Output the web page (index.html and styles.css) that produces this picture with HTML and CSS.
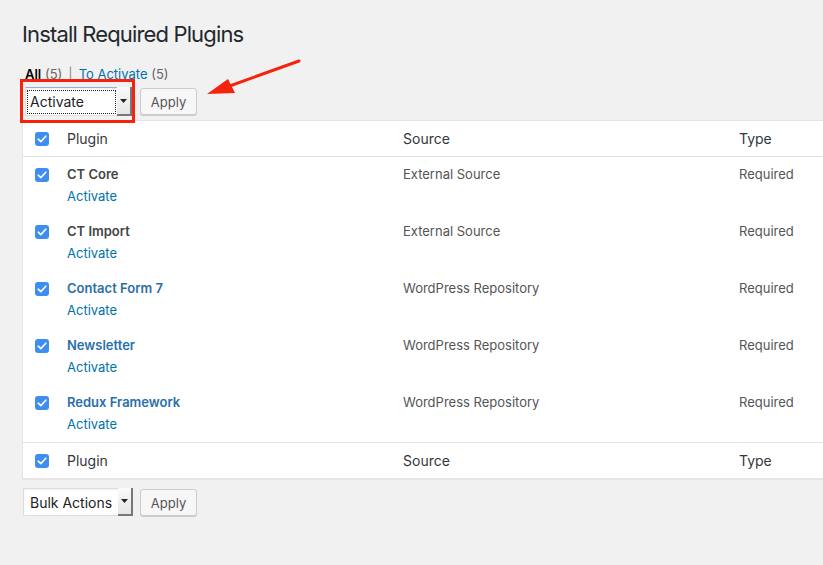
FILE: index.html
```html
<!DOCTYPE html>
<html>
<head>
<meta charset="utf-8">
<link rel="stylesheet" href="styles.css">
</head>
<body>
<div class="wrap">
  <h1 class="title">Install Required Plugins</h1>
  <ul class="subsub">
    <li><span class="current">All</span> <span class="count">(5)</span></li>
    <li class="sep">|</li>
    <li><a class="link">To Activate</a> <span class="count">(5)</span></li>
  </ul>
  <div class="actions top">
    <div class="select focused">
      <span class="sel-text"><span class="dotted">Activate</span></span>
      <span class="sel-arrow"><svg width="7" height="4" viewBox="0 0 7 4"><path d="M0 0h7L3.5 4z" fill="#222"/></svg></span>
    </div>
    <button class="btn">Apply</button>
  </div>
  <div class="table">
    <div class="row head">
      <div class="cell cb"><span class="check"><svg width="10" height="8" viewBox="0 0 10 8"><path d="M1.2 4.2L3.8 6.6 8.8 1.2" fill="none" stroke="#fff" stroke-width="1.6" stroke-linecap="round" stroke-linejoin="round"/></svg></span></div>
      <div class="cell">Plugin</div>
      <div class="cell">Source</div>
      <div class="cell">Type</div>
    </div>
    <div class="row item">
      <div class="cell cb"><span class="check"><svg width="10" height="8" viewBox="0 0 10 8"><path d="M1.2 4.2L3.8 6.6 8.8 1.2" fill="none" stroke="#fff" stroke-width="1.6" stroke-linecap="round" stroke-linejoin="round"/></svg></span></div>
      <div class="cell"><div class="name">CT Core</div><div class="act"><a class="link">Activate</a></div></div>
      <div class="cell muted">External Source</div>
      <div class="cell muted">Required</div>
    </div>
    <div class="row item">
      <div class="cell cb"><span class="check"><svg width="10" height="8" viewBox="0 0 10 8"><path d="M1.2 4.2L3.8 6.6 8.8 1.2" fill="none" stroke="#fff" stroke-width="1.6" stroke-linecap="round" stroke-linejoin="round"/></svg></span></div>
      <div class="cell"><div class="name">CT Import</div><div class="act"><a class="link">Activate</a></div></div>
      <div class="cell muted">External Source</div>
      <div class="cell muted">Required</div>
    </div>
    <div class="row item">
      <div class="cell cb"><span class="check"><svg width="10" height="8" viewBox="0 0 10 8"><path d="M1.2 4.2L3.8 6.6 8.8 1.2" fill="none" stroke="#fff" stroke-width="1.6" stroke-linecap="round" stroke-linejoin="round"/></svg></span></div>
      <div class="cell"><div class="name linked">Contact Form 7</div><div class="act"><a class="link">Activate</a></div></div>
      <div class="cell muted">WordPress Repository</div>
      <div class="cell muted">Required</div>
    </div>
    <div class="row item">
      <div class="cell cb"><span class="check"><svg width="10" height="8" viewBox="0 0 10 8"><path d="M1.2 4.2L3.8 6.6 8.8 1.2" fill="none" stroke="#fff" stroke-width="1.6" stroke-linecap="round" stroke-linejoin="round"/></svg></span></div>
      <div class="cell"><div class="name linked">Newsletter</div><div class="act"><a class="link">Activate</a></div></div>
      <div class="cell muted">WordPress Repository</div>
      <div class="cell muted">Required</div>
    </div>
    <div class="row item">
      <div class="cell cb"><span class="check"><svg width="10" height="8" viewBox="0 0 10 8"><path d="M1.2 4.2L3.8 6.6 8.8 1.2" fill="none" stroke="#fff" stroke-width="1.6" stroke-linecap="round" stroke-linejoin="round"/></svg></span></div>
      <div class="cell"><div class="name linked">Redux Framework</div><div class="act"><a class="link">Activate</a></div></div>
      <div class="cell muted">WordPress Repository</div>
      <div class="cell muted">Required</div>
    </div>
    <div class="row foot">
      <div class="cell cb"><span class="check"><svg width="10" height="8" viewBox="0 0 10 8"><path d="M1.2 4.2L3.8 6.6 8.8 1.2" fill="none" stroke="#fff" stroke-width="1.6" stroke-linecap="round" stroke-linejoin="round"/></svg></span></div>
      <div class="cell">Plugin</div>
      <div class="cell">Source</div>
      <div class="cell">Type</div>
    </div>
  </div>
  <div class="actions bottom">
    <div class="select">
      <span class="sel-text">Bulk Actions</span>
      <span class="sel-arrow"><svg width="7" height="4" viewBox="0 0 7 4"><path d="M0 0h7L3.5 4z" fill="#222"/></svg></span>
    </div>
    <button class="btn">Apply</button>
  </div>
</div>
<div class="redbox"></div>
<svg class="arrow" width="823" height="565" viewBox="0 0 823 565">
  <path d="M299 61L224 88" stroke="#f5230e" stroke-width="3" stroke-linecap="round"/>
  <path d="M207 94L228 79L235 93Z" fill="#f5230e"/>
</svg>
</body>
</html>
```
FILE: styles.css
```css
* { box-sizing: border-box; }
html, body { margin: 0; padding: 0; }
body {
  background: #f1f1f1;
  font-family: Inter, "Noto Sans", sans-serif;
  color: #32373c;
  font-size: 13px;
  width: 823px;
  height: 565px;
  overflow: hidden;
  position: relative;
}
.wrap { padding: 20px 0 0 22px; }
.title {
  margin: 0;
  font-size: 22px;
  font-weight: 400;
  line-height: 29px;
  letter-spacing: -0.85px;
  color: #23282d;
}
.subsub {
  list-style: none;
  margin: 16px 0 0 3px;
  padding: 0;
  display: flex;
  gap: 6px;
  line-height: 18px;
  color: #666;
}
.subsub .current { color: #000; font-weight: 600; }
.subsub .sep { color: #888; }
.link { color: #0073aa; text-decoration: none; }
.actions { display: flex; gap: 8px; align-items: flex-start; }
.actions.top { margin: 4px 0 0 3px; }
.select {
  display: flex;
  height: 29px;
  background: #fff;
  border: 1px solid #ddd;
  box-shadow: inset 0 1px 2px rgba(0,0,0,.07);
}
.actions.top .select { width: 107px; border-top-color: #8fb2d6; }
.actions.bottom .select { width: 110px; height: 28px; }
.sel-text {
  flex: 1;
  display: flex;
  align-items: center;
  padding: 0 1px;
  font-size: 14px;
  color: #222;
}
.actions.bottom .sel-text { padding-left: 6px; }
.dotted {
  flex: 1;
  border: 1px dotted #222;
  height: 24px;
  line-height: 22px;
  padding-left: 2px;
}
.sel-arrow {
  width: 15px;
  display: flex;
  align-items: center;
  justify-content: center;
  background: linear-gradient(#fafafa, #e6e6e6);
  border-right: 2px solid #777;
  border-bottom: 2px solid #777;
  margin: -1px -1px -1px 0;
}
.btn {
  font: inherit;
  font-size: 13px;
  height: 27px;
  width: 57px;
  background: #f7f7f7;
  border: 1px solid #ccc;
  border-radius: 3px;
  box-shadow: 0 1px 0 #ccc;
  color: #555;
  padding: 0;
  margin-top: 1px;
}
.table {
  margin-top: 4px;
  width: 1010px;
  background: #fff;
  border: 1px solid #e5e5e5;
  box-shadow: 0 1px 1px rgba(0,0,0,.04);
}
.row {
  display: grid;
  grid-template-columns: 34px 336px 336px 1fr;
}
.cell { padding: 0 10px; }
.cell.cb { padding: 0 0 0 12px; }
.head, .foot {
  height: 36px;
  align-items: center;
  font-size: 14px;
  color: #32373c;
}
.head { border-bottom: 1px solid #e1e1e1; }
.foot { border-top: 1px solid #e1e1e1; }
.item { height: 57px; align-items: start; padding-top: 7px; }
.item .cell { line-height: 20px; }
.item .cb { padding-top: 4px; }
.head .cb, .foot .cb { display: flex; align-items: center; }
.check {
  display: flex;
  align-items: center;
  justify-content: center;
  width: 14px;
  height: 14px;
  border-radius: 3px;
  background: #3d8ef0;
}
.name { font-weight: 600; color: #444; }
.name.linked { color: #2a6fa8; }
.act { line-height: 24px; }
.muted { color: #555; }
.actions.bottom { margin-top: 9px; padding-left: 1px; gap: 7px; }
.redbox {
  position: absolute;
  left: 20px;
  top: 79px;
  width: 115px;
  height: 44px;
  border: 3px solid #f5230e;
}
.arrow { position: absolute; left: 0; top: 0; pointer-events: none; }
```
